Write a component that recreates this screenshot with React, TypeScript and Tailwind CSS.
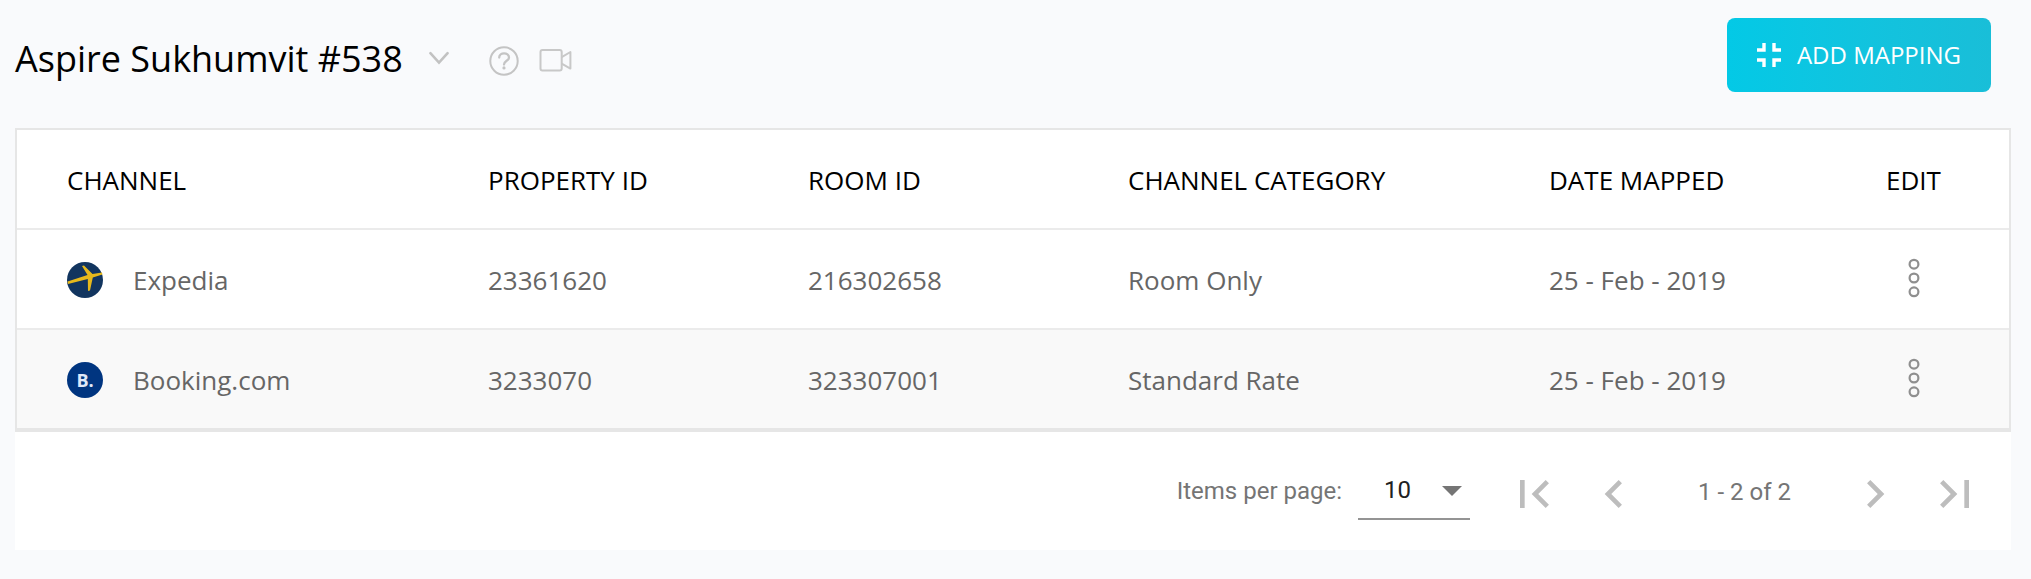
import React, { useState } from "react";

type Mapping = {
  channel: string;
  logo: "expedia" | "booking";
  propertyId: string;
  roomId: string;
  category: string;
  date: string;
};

const mappings: Mapping[] = [
  { channel: "Expedia", logo: "expedia", propertyId: "23361620", roomId: "216302658", category: "Room Only", date: "25 - Feb - 2019" },
  { channel: "Booking.com", logo: "booking", propertyId: "3233070", roomId: "323307001", category: "Standard Rate", date: "25 - Feb - 2019" },
];

function ExpediaLogo() {
  return (
    <svg className="size-9 shrink-0" viewBox="0 0 36 36" aria-hidden="true">
      <circle cx="18" cy="18" r="18" fill="#12355f" />
      <path
        d="M0.5 19.5 L20.5 13 L15 4 L17 3.4 L25.5 12 L35 10.6 L35.4 12.6 L25.8 15.6 L23 28.5 L21 29 L20.8 17 L1 22 Z"
        fill="#e6b91c"
      />
    </svg>
  );
}

function BookingLogo() {
  return (
    <span className="flex size-9 shrink-0 items-center justify-center rounded-full bg-[#003580] text-lg leading-none font-bold text-[#dfe8f8]" aria-hidden="true">
      B.
    </span>
  );
}

function DotsIcon() {
  return (
    <svg width="12" height="40" viewBox="0 0 12 40" fill="none" stroke="#8f8f8f" strokeWidth="2.2" aria-hidden="true">
      <circle cx="6" cy="6.2" r="4.4" />
      <circle cx="6" cy="20" r="4.4" />
      <circle cx="6" cy="33.8" r="4.4" />
    </svg>
  );
}

function PageButton({ label, d }: { label: string; d: string }) {
  return (
    <button type="button" aria-label={label} className="flex size-20 items-center justify-center pt-1.5 text-[#bdbdbd]">
      <svg width="56" height="56" viewBox="0 0 24 24" fill="currentColor" aria-hidden="true">
        <path d={d} />
      </svg>
    </button>
  );
}

export default function App() {
  const [pageSize, setPageSize] = useState("10");
  return (
    <main className="min-h-screen bg-[#f9fafc] pr-5 pb-7 pl-[15px] font-['Open_Sans',sans-serif]">
      <header className="flex h-32 items-start justify-between pt-[18px] pr-5">
        <div className="flex h-[82px] items-center">
          <h1 className="text-4xl text-black">Aspire Sukhumvit #538</h1>
          <button type="button" aria-label="Choose property" className="ml-6 flex items-center">
            <svg width="24" height="24" viewBox="0 0 24 24" fill="none" stroke="#c2c2c2" strokeWidth="2.6" strokeLinecap="round" aria-hidden="true">
              <path d="M3.4 6.2 L12 15.6 L20.6 6.2" />
            </svg>
          </button>
          <button type="button" aria-label="Help" className="ml-9 flex items-center">
            <svg width="32" height="36" viewBox="0 0 32 36" fill="none" stroke="#c4c4c4" strokeWidth="2" aria-hidden="true">
              <circle cx="17" cy="20" r="13.7" />
              <path d="M12.2 16.6 C12.2 10.8 22 11 22 16.4 C22 19.8 17 19.8 17 23.6" strokeWidth="2.3" strokeLinecap="round" />
              <circle cx="17" cy="26.9" r="1.6" fill="#c4c4c4" stroke="none" />
            </svg>
          </button>
          <button type="button" aria-label="Watch video" className="ml-4 flex items-center">
            <svg width="40" height="32" viewBox="0 0 40 32" fill="none" stroke="#c8c8c8" strokeWidth="2" strokeLinejoin="round" aria-hidden="true">
              <rect x="5.5" y="7" width="21.2" height="20.4" rx="2" />
              <path d="M26.7 14.2 L35.4 9 V25.6 L26.7 20.6" />
            </svg>
          </button>
        </div>
        <button
          type="button"
          className="flex items-center gap-4 rounded-lg bg-linear-to-r from-[#03c9e6] to-[#19bed8] px-[30px] py-[19px] text-2xl leading-9 font-medium text-white"
        >
          <svg width="24" height="24" viewBox="0 0 24 24" fill="none" stroke="currentColor" strokeWidth="3.4" aria-hidden="true">
            <path d="M0 7 H7 V0 M17 0 V7 H24 M0 17 H7 V24 M17 24 V17 H24" />
          </svg>
          ADD MAPPING
        </button>
      </header>

      <section className="bg-white">
        <table className="w-full table-fixed border-separate border-spacing-0 border-2 border-b-4 border-[#e6e6e6] text-left text-[26px] leading-9">
          <colgroup>
            <col className="w-[471px]" />
            <col className="w-[320px]" />
            <col className="w-[320px]" />
            <col className="w-[421px]" />
            <col />
            <col className="w-[123px]" />
          </colgroup>
          <thead>
            <tr className="h-[100px] text-black *:border-b-2 *:border-[#ebebeb] *:pt-0.5 *:font-normal">
              <th scope="col" className="pl-[50px]">CHANNEL</th>
              <th scope="col">PROPERTY ID</th>
              <th scope="col">ROOM ID</th>
              <th scope="col">CHANNEL CATEGORY</th>
              <th scope="col">DATE MAPPED</th>
              <th scope="col">EDIT</th>
            </tr>
          </thead>
          <tbody>
            {mappings.map((m) => (
              <tr
                key={m.channel}
                className="h-[100px] text-[#666] *:border-b-2 *:border-[#ebebeb] *:pt-0.5 last:h-[98px] last:bg-[#f9f9f9] last:*:border-b-0"
              >
                <td className="pl-[50px]">
                  <div className="flex items-center gap-[30px]">
                    {m.logo === "expedia" ? <ExpediaLogo /> : <BookingLogo />}
                    {m.channel}
                  </div>
                </td>
                <td>{m.propertyId}</td>
                <td>{m.roomId}</td>
                <td>{m.category}</td>
                <td>{m.date}</td>
                <td>
                  <button type="button" aria-label={"Edit " + m.channel} className="flex w-14 justify-center pb-1">
                    <DotsIcon />
                  </button>
                </td>
              </tr>
            ))}
          </tbody>
        </table>

        <nav aria-label="Pagination" className="flex h-[118px] items-center justify-end pr-4 font-[Roboto,sans-serif] text-2xl text-[#757575]">
          <label htmlFor="page-size">Items per page:</label>
          <div className="relative ml-4 w-28 border-b-2 border-[#949494]">
            <select
              id="page-size"
              value={pageSize}
              onChange={(e) => setPageSize(e.target.value)}
              className="h-14 w-full appearance-none bg-transparent pl-[26px] text-[#212121]"
            >
              <option>10</option>
              <option>25</option>
            </select>
            <svg className="pointer-events-none absolute top-6 right-2" width="20" height="10" viewBox="0 0 20 10" aria-hidden="true">
              <path d="M0 0 H20 L10 10 Z" fill="#757575" />
            </svg>
          </div>
          <div className="ml-6 flex items-center">
            <PageButton label="First page" d="M18.41 16.59L13.82 12l4.59-4.59L17 6l-6 6 6 6zM6 6h2v12H6z" />
            <PageButton label="Previous page" d="M15.41 7.41L14 6l-6 6 6 6 1.41-1.41L10.83 12z" />
            <span className="mx-11 pt-0.5">1 - 2 of 2</span>
            <PageButton label="Next page" d="M10 6L8.59 7.41 13.17 12l-4.58 4.59L10 18l6-6z" />
            <PageButton label="Last page" d="M5.59 7.41L10.18 12l-4.59 4.59L7 18l6-6-6-6zM16 6h2v12h-2z" />
          </div>
        </nav>
      </section>
    </main>
  );
}
